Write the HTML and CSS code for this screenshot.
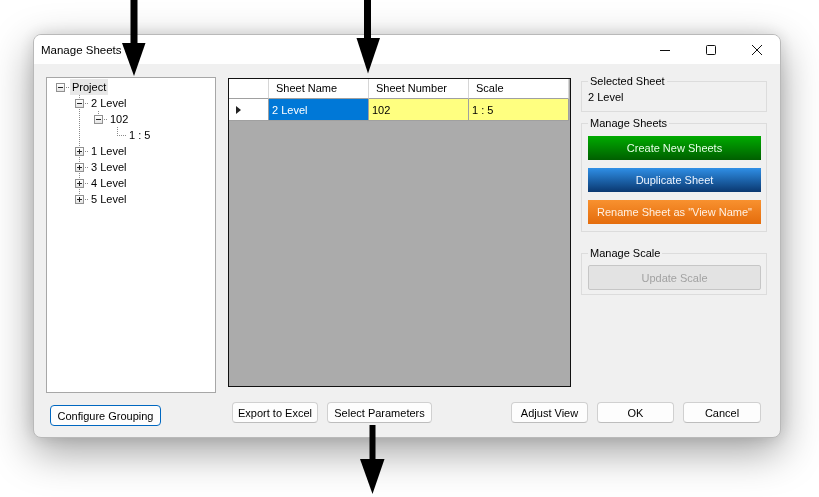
FILE: index.html
```html
<!DOCTYPE html>
<html lang="en">
<head>
    <meta charset="UTF-8">
    <title>Manage Sheets</title>
    <link rel="stylesheet" href="styles.css">
</head>
<body>
    <div class="desktop">
    <div class="dialog">
        <div class="titlebar">
            <span class="title">Manage Sheets</span>
            <div class="caption-buttons">
                <span class="cap-btn">
                    <svg width="10" height="10" viewBox="0 0 10 10"><path d="M0 5.5h10" stroke="#111" stroke-width="1"/></svg>
                </span>
                <span class="cap-btn">
                    <svg width="10" height="10" viewBox="0 0 10 10"><rect x="0.5" y="0.5" width="9" height="9" rx="1" fill="none" stroke="#111" stroke-width="1"/></svg>
                </span>
                <span class="cap-btn">
                    <svg width="10" height="10" viewBox="0 0 10 10"><path d="M0 0L10 10M10 0L0 10" stroke="#111" stroke-width="1"/></svg>
                </span>
            </div>
        </div>

        <div class="dialog-body">
            <div class="left-col">
                <div class="tree">
                    <div class="tree-row">
                        <span class="cell c-end"><i class="box"></i></span>
                        <span class="label selected">Project</span>
                    </div>
                    <div class="tree-row">
                        <span class="cell"></span>
                        <span class="cell c-tee"><i class="box"></i></span>
                        <span class="label">2 Level</span>
                    </div>
                    <div class="tree-row">
                        <span class="cell"></span>
                        <span class="cell c-line"></span>
                        <span class="cell c-last"><i class="box"></i></span>
                        <span class="label">102</span>
                    </div>
                    <div class="tree-row">
                        <span class="cell"></span>
                        <span class="cell c-line"></span>
                        <span class="cell"></span>
                        <span class="cell c-last"></span>
                        <span class="label">1 : 5</span>
                    </div>
                    <div class="tree-row">
                        <span class="cell"></span>
                        <span class="cell c-tee"><i class="box plus"></i></span>
                        <span class="label">1 Level</span>
                    </div>
                    <div class="tree-row">
                        <span class="cell"></span>
                        <span class="cell c-tee"><i class="box plus"></i></span>
                        <span class="label">3 Level</span>
                    </div>
                    <div class="tree-row">
                        <span class="cell"></span>
                        <span class="cell c-tee"><i class="box plus"></i></span>
                        <span class="label">4 Level</span>
                    </div>
                    <div class="tree-row">
                        <span class="cell"></span>
                        <span class="cell c-last"><i class="box plus"></i></span>
                        <span class="label">5 Level</span>
                    </div>
                </div>
                <button class="btn btn-focus configure">Configure Grouping</button>
            </div>

            <div class="main-col">
                <div class="main-top">
                    <div class="sheet-grid">
                        <div class="grid-head">
                            <div></div>
                            <div>Sheet Name</div>
                            <div>Sheet Number</div>
                            <div>Scale</div>
                        </div>
                        <div class="grid-row">
                            <div class="row-head">
                                <svg width="5" height="8" viewBox="0 0 5 8"><path d="M0 0L5 4L0 8Z" fill="#222"/></svg>
                            </div>
                            <div class="cell-selected">2 Level</div>
                            <div>102</div>
                            <div>1 : 5</div>
                        </div>
                    </div>

                    <div class="side-panel">
                        <fieldset class="group">
                            <legend>Selected Sheet</legend>
                            <div class="group-value">2 Level</div>
                        </fieldset>
                        <fieldset class="group group-sheets">
                            <legend>Manage Sheets</legend>
                            <div class="action-list">
                                <button class="action green">Create New Sheets</button>
                                <button class="action blue">Duplicate Sheet</button>
                                <button class="action orange">Rename Sheet as "View Name"</button>
                            </div>
                        </fieldset>
                        <fieldset class="group group-scale">
                            <legend>Manage Scale</legend>
                            <button class="update-scale" disabled>Update Scale</button>
                        </fieldset>
                    </div>
                </div>

                <div class="bottom-bar">
                    <div class="btn-group">
                        <button class="btn w-export">Export to Excel</button>
                        <button class="btn w-params">Select Parameters</button>
                    </div>
                    <div class="btn-group">
                        <button class="btn w-adjust">Adjust View</button>
                        <button class="btn w-ok">OK</button>
                        <button class="btn w-cancel">Cancel</button>
                    </div>
                </div>
            </div>
        </div>
    </div>
    </div>

    <svg class="arrows" width="819" height="497" viewBox="0 0 819 497">
        <rect x="130.5" y="0" width="7" height="44" fill="#000"/>
        <path d="M122 43H145.5L134 76Z" fill="#000"/>
        <rect x="364" y="0" width="7" height="39" fill="#000"/>
        <path d="M356.5 38H380L368 73.5Z" fill="#000"/>
        <rect x="369.5" y="425" width="6" height="35" fill="#000"/>
        <path d="M360 459H384.5L372.5 494Z" fill="#000"/>
    </svg>
</body>
</html>
```

FILE: styles.css
```css
html, body {
    margin: 0;
    background: #ffffff;
}

body {
    font-family: "Liberation Sans", Arial, sans-serif;
    font-size: 11px;
    color: #000;
}

.desktop {
    width: 819px;
    height: 497px;
    padding: 34px 0 0 33px;
    box-sizing: border-box;
}

.dialog {
    width: 748px;
    height: 404px;
    box-sizing: border-box;
    display: flex;
    flex-direction: column;
    border: 1px solid #b9b9b9;
    border-radius: 8px;
    background: #f0f0f0;
    filter: drop-shadow(0 0 8px rgba(0,0,0,0.12)) drop-shadow(0 14px 20px rgba(0,0,0,0.36));
}

/* title bar */
.titlebar {
    height: 29px;
    flex: none;
    display: flex;
    align-items: center;
    justify-content: space-between;
    background: #ffffff;
    border-radius: 7px 7px 0 0;
}

.title {
    padding-left: 7px;
    font-size: 11.5px;
    padding-top: 1px;
}

.caption-buttons {
    display: flex;
    height: 100%;
}

.cap-btn {
    width: 46px;
    display: flex;
    align-items: center;
    justify-content: center;
    padding-top: 1px;
}

/* body layout */
.dialog-body {
    flex: 1;
    display: flex;
    padding: 10px 0 0 12px;
}

.left-col {
    width: 170px;
    margin-right: 12px;
}

.tree {
    margin-top: 3px;
    height: 316px;
    box-sizing: border-box;
    border: 1px solid #a7a7a7;
    background: #ffffff;
    padding: 1px 0 0 4px;
}

.tree-row {
    display: flex;
    height: 16px;
    align-items: center;
}

.cell {
    width: 19px;
    height: 16px;
    flex: none;
    background-repeat: no-repeat;
}

.c-line {
    background-image: repeating-linear-gradient(to bottom, #8a8a8a 0 1px, transparent 1px 2px);
    background-size: 1px 16px;
    background-position: 9px 0;
}

.c-tee {
    background-image:
        repeating-linear-gradient(to bottom, #8a8a8a 0 1px, transparent 1px 2px),
        repeating-linear-gradient(to right, #8a8a8a 0 1px, transparent 1px 2px);
    background-size: 1px 16px, 10px 1px;
    background-position: 9px 0, 9px 8px;
}

.c-last {
    background-image:
        repeating-linear-gradient(to bottom, #8a8a8a 0 1px, transparent 1px 2px),
        repeating-linear-gradient(to right, #8a8a8a 0 1px, transparent 1px 2px);
    background-size: 1px 8px, 10px 1px;
    background-position: 9px 0, 9px 8px;
}

.c-end {
    background-image: repeating-linear-gradient(to right, #8a8a8a 0 1px, transparent 1px 2px);
    background-size: 10px 1px;
    background-position: 9px 8px;
}

.box {
    display: block;
    width: 9px;
    height: 9px;
    box-sizing: border-box;
    margin: 4px 0 0 5px;
    border: 1px solid #919191;
    background:
        linear-gradient(#222, #222) center / 5px 1px no-repeat,
        linear-gradient(#ffffff, #e4e4e4);
}

.box.plus {
    background:
        linear-gradient(#222, #222) center / 5px 1px no-repeat,
        linear-gradient(#222, #222) center / 1px 5px no-repeat,
        linear-gradient(#ffffff, #e4e4e4);
}

.label {
    padding: 0 2px;
    height: 16px;
    line-height: 16px;
    white-space: nowrap;
}

.label.selected {
    background: #e8e8e8;
}

/* buttons */
.btn {
    height: 21px;
    padding: 0;
    font-family: inherit;
    font-size: 11px;
    color: #000;
    background: #fdfdfd;
    border: 1px solid #d0d0d0;
    border-bottom-color: #bdbdbd;
    border-radius: 4px;
}

.btn-focus {
    border: 1px solid #0067c0;
}

.configure {
    width: 111px;
    margin: 12px 0 0 4px;
}

.main-col {
    width: 539px;
    display: flex;
    flex-direction: column;
}

.main-top {
    display: flex;
    align-items: flex-start;
}

/* data grid */
.sheet-grid {
    width: 343px;
    height: 309px;
    margin-top: 4px;
    margin-right: 10px;
    box-sizing: border-box;
    border: 1px solid #111;
    background: #ababab;
}

.grid-head,
.grid-row {
    display: grid;
    grid-template-columns: 40px 100px 100px 100px;
}

.grid-head > div {
    height: 20px;
    box-sizing: border-box;
    line-height: 19px;
    padding-left: 7px;
    background: #ffffff;
    border-right: 1px solid #d6d6d6;
    border-bottom: 1px solid #a0a0a0;
}

.grid-row > div {
    height: 22px;
    box-sizing: border-box;
    line-height: 22px;
    padding-left: 3px;
    background: #ffff80;
    border-right: 1px solid #a0a0a0;
    border-bottom: 1px solid #a0a0a0;
}

.grid-row > .row-head {
    background: #ffffff;
    padding-left: 7px;
    display: flex;
    align-items: center;
}

.grid-row > .cell-selected {
    background: #0078d7;
    color: #ffffff;
}

/* right panel */
.side-panel {
    width: 186px;
}

.group {
    margin: 0;
    padding: 0 5px 7px 6px;
    border: 1px solid #dcdcdc;
    min-width: 0;
}

.group legend {
    padding: 0 2px;
    line-height: 14px;
    font-size: 11px;
}

.group-value {
    margin-top: 2px;
    line-height: 14px;
}

.group-sheets {
    margin-top: 4px;
}

.action-list {
    display: flex;
    flex-direction: column;
    gap: 8px;
    margin-top: 6px;
}

.action {
    height: 24px;
    border: none;
    padding: 0;
    font-family: inherit;
    font-size: 11px;
}

.green {
    background: linear-gradient(#00ab00, #005f00);
    color: #e6ffe6;
}

.blue {
    background: linear-gradient(#2f8fe6, #0a3870);
    color: #eef5ff;
}

.orange {
    background: linear-gradient(#f8912f, #e46c0c);
    color: #fff0e2;
}

.group-scale {
    margin-top: 14px;
    padding-bottom: 4px;
}

.update-scale {
    width: 100%;
    height: 25px;
    margin-top: 5px;
    padding: 0;
    font-family: inherit;
    font-size: 11px;
    color: #a2a2a2;
    background: #e3e3e3;
    border: 1px solid #c6c6c6;
    border-radius: 2px;
}

/* bottom buttons */
.bottom-bar {
    display: flex;
    justify-content: space-between;
    margin-top: 15px;
    padding: 0 6px 0 4px;
}

.btn-group {
    display: flex;
    gap: 9px;
}

.w-export { width: 86px; }
.w-params { width: 105px; }
.w-adjust { width: 77px; }
.w-ok { width: 77px; }
.w-cancel { width: 78px; }

.arrows {
    position: absolute;
    left: 0;
    top: 0;
    pointer-events: none;
}
```
